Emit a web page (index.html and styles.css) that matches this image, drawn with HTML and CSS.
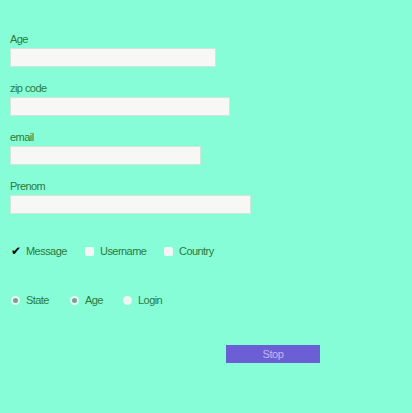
FILE: index.html
```html
<!DOCTYPE html>
<html>
<head>
<meta charset="utf-8">
<link rel="stylesheet" href="styles.css">
</head>
<body>
<form class="form">
  <div class="field">
    <label class="label">Age</label>
    <input class="input w-age" type="text">
  </div>
  <div class="field">
    <label class="label">zip code</label>
    <input class="input w-zip" type="text">
  </div>
  <div class="field">
    <label class="label">email</label>
    <input class="input w-email" type="text">
  </div>
  <div class="field">
    <label class="label">Prenom</label>
    <input class="input w-prenom" type="text">
  </div>

  <div class="row checks">
    <span class="opt opt-message"><span class="tick">✔</span><span>Message</span></span>
    <span class="opt opt-user"><span class="box"></span><span>Username</span></span>
    <span class="opt"><span class="box"></span><span>Country</span></span>
  </div>

  <div class="row radios">
    <span class="opt opt-state"><span class="radio on"></span><span>State</span></span>
    <span class="opt opt-age"><span class="radio on"></span><span>Age</span></span>
    <span class="opt"><span class="radio"></span><span>Login</span></span>
  </div>

  <div class="actions">
    <button class="btn" type="button">Stop</button>
  </div>
</form>
</body>
</html>
```
FILE: styles.css
```css
html, body {
  margin: 0;
  padding: 0;
  background: #86fdd6;
  height: 100%;
}
body {
  font-family: "Liberation Sans", Arial, sans-serif;
  font-size: 11px;
  letter-spacing: -0.55px;
  color: #2c7a3c;
}
.form {
  padding: 32px 0 0 10px;
  display: flex;
  flex-direction: column;
}
.field {
  display: flex;
  flex-direction: column;
  align-items: flex-start;
  height: 49px;
}
.label {
  line-height: 15px;
  height: 15px;
}
.input {
  box-sizing: border-box;
  height: 19px;
  margin: 1px 0 0 0;
  padding: 0;
  border: 1px solid #cfe6da;
  background: #f7f8f6;
  outline: none;
}
.w-age { width: 206px; }
.w-zip { width: 220px; }
.w-email { width: 191px; }
.w-prenom { width: 241px; }

.row {
  display: flex;
  align-items: center;
  height: 16px;
}
.checks { margin-top: 15px; }
.radios { margin-top: 33px; }
.opt {
  display: flex;
  align-items: center;
  gap: 5px;
}
.opt-message { width: 75px; }
.opt-user { width: 79px; }
.opt-state { width: 59px; }
.opt-age { width: 53px; }
.tick {
  width: 10px;
  font-family: "DejaVu Sans", sans-serif;
  font-size: 12px;
  font-weight: bold;
  color: #000;
  line-height: 12px;
  margin-left: 1px;
  letter-spacing: 0;
}
.box {
  width: 9px;
  height: 9px;
  border-radius: 2px;
  background: #f2f6f4;
  margin-right: 1px;
}
.radio {
  box-sizing: border-box;
  width: 9px;
  height: 9px;
  border-radius: 50%;
  background: #eef5f2;
  margin-left: 1px;
  margin-right: 1px;
  display: flex;
  align-items: center;
  justify-content: center;
}
.radio.on::after {
  content: "";
  width: 5px;
  height: 5px;
  border-radius: 50%;
  background: #6aa894;
}
.actions {
  display: flex;
  padding-left: 216px;
  margin-top: 37px;
}
.btn {
  width: 94px;
  height: 18px;
  padding: 0;
  border: none;
  background: #6c5fd6;
  color: #c7b3f2;
  font-family: "Liberation Sans", Arial, sans-serif;
  font-size: 11px;
  letter-spacing: -0.4px;
}
```
